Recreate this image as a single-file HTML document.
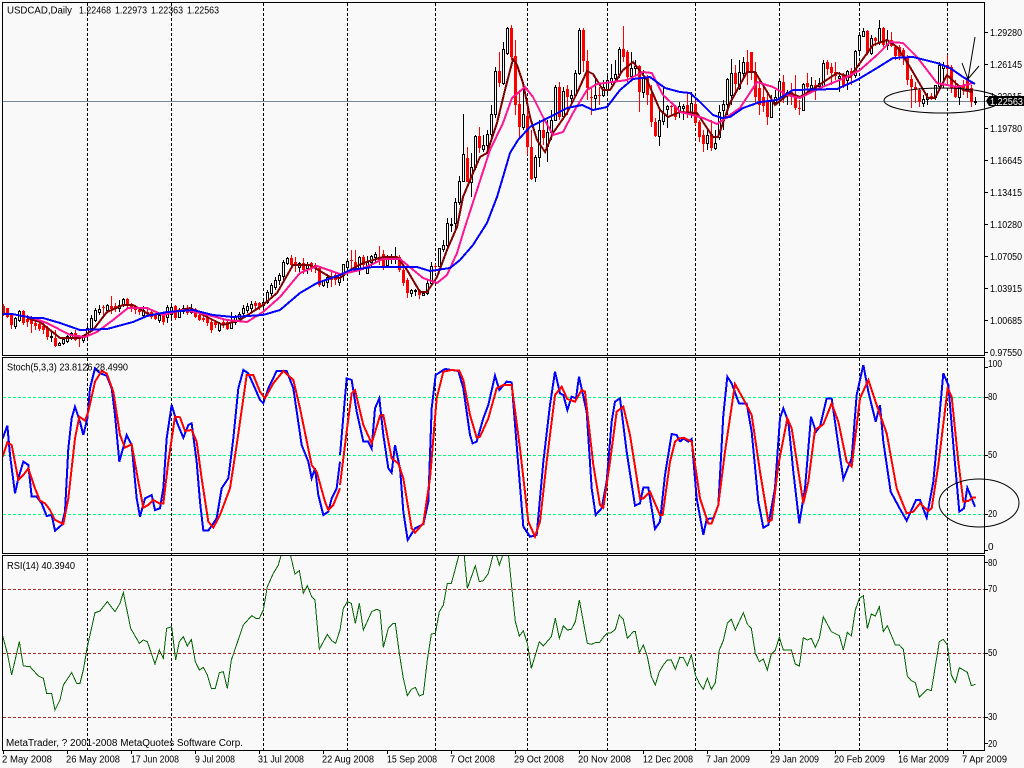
<!DOCTYPE html>
<html><head><meta charset="utf-8"><title>USDCAD,Daily</title>
<style>html,body{margin:0;padding:0;background:#f9f9f9;width:1024px;height:768px;overflow:hidden}svg{display:block}text{font-family:"Liberation Sans",sans-serif;font-size:10px;fill:#000}polyline,path,line{fill:none}</style></head>
<body>
<svg width="1024" height="768" viewBox="0 0 1024 768" xmlns="http://www.w3.org/2000/svg">
<defs>
<clipPath id="m"><rect x="3" y="3" width="981" height="352"/></clipPath>
<clipPath id="s"><rect x="3" y="358" width="981" height="195"/></clipPath>
<clipPath id="r"><rect x="3" y="556" width="981" height="194"/></clipPath>
</defs>
<rect width="1024" height="768" fill="#f9f9f9"/>
<g shape-rendering="crispEdges">
<!-- grid -->
<path stroke="#000" stroke-dasharray="3 2" d="M87.5 3V750M171.5 3V750M263.5 3V750M347.5 3V750M435.5 3V750M527.5 3V750M607.5 3V750M695.5 3V750M779.5 3V750M859.5 3V750M947.5 3V750"/>
<path stroke="#00ff7f" stroke-dasharray="3 2" d="M3 397.5H984M3 455.5H984M3 514.5H984"/>
<path stroke="#a52a2a" stroke-dasharray="3 2" d="M3 589.5H984M3 653.5H984M3 717.5H984"/>
<path stroke="#778899" d="M3 101.5H986"/>
<g clip-path="url(#m)">
<path stroke="#f00" d="M3.5 304V316M7.5 308V318M11.5 313V329M23.5 310V325M27.5 315V327M31.5 316V333M35.5 318V330M39.5 320V331M43.5 322V334M47.5 326V340M55.5 330V347M75.5 330V341M79.5 335V347M103.5 305V315M111.5 296V314M115.5 303V312M127.5 298V308M131.5 303V312M135.5 305V314M139.5 307V315M147.5 309V316M151.5 310V319M155.5 314V320M163.5 314V325M175.5 305V320M187.5 305V315M195.5 308V318M199.5 312V321M203.5 312V322M207.5 315V326M211.5 320V333M215.5 320V328M223.5 320V328M227.5 320V330M255.5 301V310M259.5 302V310M291.5 255V268M295.5 257V272M303.5 258V274M311.5 262V272M315.5 263V273M319.5 267V287M331.5 270V287M335.5 273V285M351.5 250V270M355.5 250V272M363.5 255V270M379.5 246V265M383.5 250V270M399.5 255V272M403.5 268V286M407.5 278V298M419.5 289V299M435.5 264V272M467.5 147V182M479.5 127V153M499.5 52V87M511.5 25V60M515.5 40V115M519.5 90V137M527.5 100V155M531.5 130V180M543.5 120V145M559.5 82V120M567.5 85V115M583.5 28V72M587.5 50V100M591.5 87V115M599.5 87V105M623.5 26V62M627.5 50V82M639.5 65V112M647.5 75V105M651.5 85V127M655.5 118V137M671.5 105V115M675.5 105V120M687.5 93V118M695.5 100V125M699.5 120V142M703.5 130V152M711.5 120V151M735.5 65V95M747.5 50V85M751.5 52V80M755.5 62V103M759.5 80V115M763.5 85V112M767.5 93V125M783.5 75V103M791.5 83V105M795.5 75V110M799.5 100V115M807.5 73V92M815.5 80V100M827.5 60V75M831.5 63V85M835.5 62V80M843.5 73V88M851.5 68V85M867.5 30V55M875.5 37V46M883.5 27V47M891.5 32V47M895.5 45V60M899.5 45V60M903.5 48V65M907.5 55V85M911.5 75V108M915.5 82V103M919.5 88V107M931.5 93V100M947.5 55V85M951.5 65V93M955.5 80V98M963.5 80V95M967.5 78V98M971.5 85V107"/>
<path stroke="#f00" stroke-width="3" d="M3.5 306V313M7.5 308V317M11.5 315V325M23.5 311V323M27.5 319V322M31.5 320V324M35.5 323V326M39.5 324V329M43.5 326V330M47.5 328V337M55.5 338V346M75.5 333V340M79.5 338V339M103.5 307V308M111.5 306V309M115.5 306V309M127.5 299V305M131.5 304V308M135.5 308V310M139.5 310V312M147.5 312V313M151.5 312V317M155.5 315V319M163.5 315V322M175.5 306V318M187.5 308V313M195.5 309V317M199.5 315V320M203.5 318V320M207.5 317V323M211.5 322V330M215.5 322V325M223.5 322V325M227.5 322V329M255.5 303V306M259.5 303V307M291.5 258V265M295.5 262V265M303.5 263V270M311.5 263V268M315.5 265V268M319.5 268V285M331.5 277V280M335.5 275V280M351.5 260V261M355.5 262V268M363.5 257V265M379.5 257V260M383.5 254V268M399.5 257V270M403.5 270V283M407.5 280V293M419.5 290V295M435.5 266V267M467.5 158V182M479.5 136V148M499.5 71V83M511.5 28V57M515.5 56V105M519.5 104V127M527.5 116V147M531.5 147V179M543.5 130V138M559.5 87V117M567.5 89V97M583.5 30V61M587.5 61V88M591.5 97V98M599.5 95V96M623.5 49V57M627.5 52V77M639.5 66V92M647.5 78V95M651.5 94V122M655.5 122V136M671.5 106V107M675.5 107V117M687.5 105V113M695.5 104V123M699.5 122V137M703.5 135V144M711.5 134V148M735.5 73V84M747.5 62V72M751.5 52V71M755.5 72V97M759.5 88V105M763.5 97V106M767.5 102V117M783.5 82V96M791.5 92V97M795.5 95V108M799.5 108V109M807.5 83V87M815.5 85V91M827.5 62V69M831.5 67V73M835.5 72V76M843.5 75V86M851.5 71V76M867.5 31V53M875.5 38V41M883.5 28V45M891.5 40V46M895.5 47V56M899.5 47V56M903.5 50V57M907.5 57V80M911.5 79V87M915.5 87V89M919.5 90V102M931.5 96V98M947.5 65V69M951.5 67V88M955.5 86V97M963.5 86V88M967.5 80V90M971.5 88V102"/>
<path stroke="#000" d="M15.5 317V329M19.5 310V322M51.5 332V342M59.5 342V346M63.5 338V345M67.5 335V343M71.5 332V340M83.5 335V343M87.5 326V338M91.5 315V332M95.5 308V322M99.5 305V315M107.5 304V312M119.5 300V312M123.5 298V307M143.5 306V318M159.5 314V323M167.5 305V323M171.5 305V318M179.5 308V318M183.5 305V314M191.5 304V314M219.5 322V332M231.5 312V329M235.5 315V325M239.5 312V322M243.5 305V316M247.5 303V313M251.5 301V312M263.5 300V308M267.5 290V304M271.5 283V296M275.5 277V290M279.5 273V285M283.5 260V280M287.5 257V265M299.5 262V272M307.5 262V274M323.5 280V287M327.5 274V288M339.5 273V286M343.5 264V281M347.5 258V270M359.5 256V275M367.5 256V273M371.5 255V266M375.5 252V262M387.5 255V268M391.5 254V264M395.5 247V264M411.5 289V297M415.5 289V296M423.5 292V296M427.5 280V295M431.5 262V285M439.5 248V266M443.5 240V252M447.5 218V248M451.5 218V232M455.5 198V229M459.5 176V205M463.5 114V181M471.5 153V197M475.5 135V170M483.5 135V152M487.5 130V150M491.5 105V140M495.5 67V118M503.5 42V85M507.5 27V55M523.5 85V130M535.5 155V182M539.5 120V167M547.5 120V162M551.5 110V140M555.5 85V120M563.5 87V118M571.5 90V103M575.5 70V97M579.5 28V75M595.5 77V110M603.5 80V97M607.5 73V93M611.5 64V85M615.5 60V80M619.5 47V78M631.5 52V80M635.5 60V76M643.5 70V98M659.5 110V146M663.5 88V125M667.5 105V128M679.5 102V118M683.5 104V120M691.5 92V118M707.5 128V150M715.5 130V150M719.5 105V140M723.5 100V130M727.5 78V115M731.5 59V105M739.5 60V90M743.5 57V80M771.5 95V117M775.5 90V105M779.5 80V105M787.5 90V105M803.5 83V111M811.5 77V92M819.5 78V88M823.5 60V87M839.5 72V92M847.5 70V90M855.5 50V78M859.5 32V55M863.5 28V37M871.5 35V55M879.5 20V45M887.5 30V50M923.5 95V107M927.5 93V105M935.5 85V100M939.5 62V88M943.5 62V88M959.5 85V105M975.5 97V105"/>
<path stroke="#000" fill="#f9f9f9" style="fill:#f9f9f9" d="M14.5 318.5h2v8h-2zM18.5 311.5h2v9h-2zM50.5 336.5h2v1h-2zM58.5 343.5h2v2h-2zM62.5 339.5h2v4h-2zM66.5 336.5h2v5h-2zM70.5 333.5h2v5h-2zM82.5 335.5h2v5h-2zM86.5 328.5h2v7h-2zM90.5 318.5h2v10h-2zM94.5 310.5h2v10h-2zM98.5 309.5h2v3h-2zM106.5 305.5h2v5h-2zM118.5 305.5h2v3h-2zM122.5 299.5h2v6h-2zM142.5 310.5h2v5h-2zM158.5 315.5h2v5h-2zM166.5 307.5h2v10h-2zM170.5 307.5h2v7h-2zM178.5 310.5h2v7h-2zM182.5 308.5h2v3h-2zM190.5 308.5h2v4h-2zM218.5 323.5h2v7h-2zM230.5 322.5h2v6h-2zM234.5 317.5h2v5h-2zM238.5 314.5h2v4h-2zM242.5 308.5h2v5h-2zM246.5 306.5h2v4h-2zM250.5 304.5h2v4h-2zM262.5 302.5h2v3h-2zM266.5 292.5h2v10h-2zM270.5 285.5h2v8h-2zM274.5 280.5h2v7h-2zM278.5 275.5h2v5h-2zM282.5 262.5h2v14h-2zM286.5 258.5h2v5h-2zM298.5 263.5h2v4h-2zM306.5 264.5h2v4h-2zM322.5 280.5h2v5h-2zM326.5 277.5h2v5h-2zM338.5 275.5h2v7h-2zM342.5 264.5h2v11h-2zM346.5 261.5h2v6h-2zM358.5 257.5h2v11h-2zM366.5 262.5h2v11h-2zM370.5 256.5h2v6h-2zM374.5 254.5h2v3h-2zM386.5 259.5h2v6h-2zM390.5 257.5h2v1h-2zM394.5 256.5h2v2h-2zM410.5 290.5h2v3h-2zM414.5 290.5h2v1h-2zM422.5 293.5h2v2h-2zM426.5 283.5h2v10h-2zM430.5 266.5h2v17h-2zM438.5 248.5h2v18h-2zM442.5 245.5h2v4h-2zM446.5 223.5h2v22h-2zM450.5 224.5h2v1h-2zM454.5 202.5h2v21h-2zM458.5 181.5h2v21h-2zM462.5 154.5h2v27h-2zM470.5 167.5h2v15h-2zM474.5 136.5h2v31h-2zM482.5 145.5h2v4h-2zM486.5 134.5h2v11h-2zM490.5 114.5h2v20h-2zM494.5 71.5h2v43h-2zM502.5 49.5h2v34h-2zM506.5 28.5h2v25h-2zM522.5 114.5h2v13h-2zM534.5 157.5h2v20h-2zM538.5 130.5h2v27h-2zM546.5 132.5h2v14h-2zM550.5 120.5h2v12h-2zM554.5 87.5h2v33h-2zM562.5 91.5h2v25h-2zM570.5 95.5h2v3h-2zM574.5 73.5h2v22h-2zM578.5 30.5h2v43h-2zM594.5 95.5h2v3h-2zM602.5 87.5h2v8h-2zM606.5 80.5h2v9h-2zM610.5 78.5h2v3h-2zM614.5 74.5h2v4h-2zM618.5 49.5h2v25h-2zM630.5 68.5h2v8h-2zM634.5 66.5h2v2h-2zM642.5 78.5h2v14h-2zM658.5 120.5h2v16h-2zM662.5 113.5h2v8h-2zM666.5 106.5h2v3h-2zM678.5 106.5h2v6h-2zM682.5 106.5h2v2h-2zM690.5 103.5h2v10h-2zM706.5 135.5h2v8h-2zM714.5 143.5h2v5h-2zM718.5 112.5h2v25h-2zM722.5 104.5h2v6h-2zM726.5 79.5h2v25h-2zM730.5 73.5h2v22h-2zM738.5 72.5h2v16h-2zM742.5 62.5h2v11h-2zM770.5 101.5h2v16h-2zM774.5 97.5h2v5h-2zM778.5 81.5h2v17h-2zM786.5 92.5h2v3h-2zM802.5 84.5h2v26h-2zM810.5 85.5h2v3h-2zM818.5 83.5h2v3h-2zM822.5 63.5h2v23h-2zM838.5 76.5h2v2h-2zM846.5 71.5h2v9h-2zM854.5 51.5h2v24h-2zM858.5 35.5h2v15h-2zM862.5 31.5h2v5h-2zM870.5 38.5h2v15h-2zM878.5 28.5h2v14h-2zM886.5 40.5h2v5h-2zM922.5 99.5h2v4h-2zM926.5 97.5h2v2h-2zM934.5 85.5h2v12h-2zM938.5 65.5h2v21h-2zM942.5 65.5h2v3h-2zM958.5 87.5h2v10h-2zM974.5 101.5h2v1h-2z"/>
<!-- moving averages -->
<polyline stroke="#800000" stroke-width="2" points="27,318 40,322 60,338 80,338 93,330 107,312 123,305 133,305 150,315 173,312 190,308 207,317 223,325 240,320 263,305 277,293 293,265 310,265 330,277 340,278 350,270 363,263 383,257 397,257 407,270 420,292 427,292 437,277 447,250 457,227 463,197 473,173 480,157 487,153 497,123 505,90 513,59 517,65 523,83 530,117 537,140 545,152 553,133 567,113 577,93 587,71 593,74 603,90 610,90 623,70 633,62 647,80 660,110 668,117 680,112 697,113 713,137 718,137 730,103 747,72 755,72 763,85 775,105 790,93 800,97 813,89 837,73 850,77 860,63 873,45 887,40 897,47 910,67 928,98 935,98 947,75 963,90 973,92"/>
<polyline stroke="#ff1493" stroke-width="2" points="33,318 47,323 70,335 85,337 97,332 113,320 128,308 147,308 163,315 183,310 200,313 227,320 247,322 263,312 280,297 300,273 317,266 340,274 347,273 360,270 383,259 400,259 423,278 437,283 447,275 457,253 465,227 477,190 490,150 503,123 512,98 525,87 533,97 543,117 553,135 563,132 573,113 587,90 597,84 627,80 643,72 652,73 663,95 677,108 680,112 693,115 703,118 717,124 730,115 740,108 757,82 773,87 787,95 800,98 820,88 847,77 860,70 877,55 890,42 903,43 917,57 937,83 957,87 973,83"/>
<polyline stroke="#0000ff" stroke-width="2" points="3,314 12,314 33,318 43,318 60,323 80,330 107,329 133,322 147,316 167,312 193,310 213,315 233,317 263,315 280,310 300,293 317,283 340,275 350,270 373,267 417,267 430,271 450,268 460,260 473,245 487,223 497,197 503,177 510,153 518,140 530,127 550,117 567,108 582,105 593,110 607,107 620,90 633,79 650,77 665,88 680,92 690,93 700,102 713,115 722,118 730,117 743,108 760,102 777,100 793,90 837,89 857,80 877,68 893,58 913,57 937,63 950,68 963,77 975,84"/>
</g>
<!-- stochastic -->
<g clip-path="url(#s)">
<g transform="translate(0,355) scale(.33333)" stroke-width="6" stroke="#0000ff">
<polyline points="8,250 22,212 30,300 45,415 55,370 70,320 85,330 95,425 110,425 125,445 140,483 155,480 165,527 185,510 195,470 205,280 215,190 225,155 240,200 250,240 262,190 270,100 285,40 300,55 320,62 335,100 345,180 358,320 380,240 395,270 410,430 420,485 435,430 455,420 465,465 480,460 490,400 500,250 515,150 530,200 550,248 565,210 575,205 590,320 600,440 610,527 625,527 650,490 665,400 685,370 700,250 715,100 730,45 745,55 765,100 780,135 790,145 805,100 830,48 860,48 880,100 905,270 925,320 935,370 945,340 955,420 970,480 985,470 995,430 1010,400 1020,320"/>
</g>
<g transform="translate(340,355) scale(.33333)" stroke-width="6" stroke="#0000ff">
<polyline points="0,300 20,70 35,75 50,170 70,260 85,260 95,280 105,160 118,130 130,240 145,340 155,353 165,270 180,340 190,470 203,555 225,520 250,508 265,440 275,160 287,60 315,42 355,48 370,100 390,240 398,265 410,260 430,190 445,150 465,62 478,105 500,80 515,82 530,270 550,515 570,545 590,540 610,320 630,150 645,50 660,115 670,120 682,165 695,125 708,130 717,65 740,170 755,400 767,480 785,460 800,380 815,200 825,140 840,130 860,290 885,452 900,445 910,398 925,398 945,522 960,500 975,360 995,237 1010,240 1020,260"/>
</g>
<g transform="translate(680,355) scale(.33333)" stroke-width="6" stroke="#0000ff">
<polyline points="0,260 10,250 25,260 35,252 50,430 70,540 80,492 100,490 115,450 130,180 142,65 155,85 177,145 200,145 215,230 235,440 250,518 265,510 285,400 300,190 310,160 325,200 340,350 358,505 375,400 393,185 408,230 420,215 440,130 455,130 475,270 490,372 515,310 530,120 550,30 565,110 587,200 600,150 610,260 632,410 660,462 680,497 708,435 720,435 740,488 760,380 790,55 805,90 820,270 838,470 852,460 862,398 885,455"/>
</g>
<g transform="translate(0,355) scale(.33333)" stroke-width="6" stroke="#ff0000">
<polyline points="8,305 22,262 35,270 55,375 70,360 85,340 105,400 120,437 135,445 150,465 165,495 190,507 205,430 225,250 238,185 255,197 265,170 285,80 305,48 320,55 340,110 360,240 375,278 395,268 415,380 430,458 445,450 460,435 478,445 490,445 505,320 525,185 540,187 555,228 575,225 590,260 605,370 625,500 640,518 660,480 690,400 710,270 740,60 760,60 780,110 795,130 820,85 850,48 880,75 900,160 935,330 950,350 975,440 985,465 1000,450 1020,400"/>
</g>
<g transform="translate(340,355) scale(.33333)" stroke-width="6" stroke="#ff0000">
<polyline points="0,390 20,230 35,115 45,105 70,210 95,265 120,182 130,180 155,310 175,325 190,370 215,520 225,533 250,505 270,370 290,130 310,50 335,45 358,47 370,75 390,180 410,248 420,245 445,190 470,100 490,90 515,90 540,280 565,500 585,545 600,500 620,320 645,120 665,95 682,132 705,140 725,105 735,110 760,330 780,450 790,458 810,320 830,170 850,155 870,240 900,430 910,430 930,410 960,480 968,480 990,320 1005,260 1020,248"/>
</g>
<g transform="translate(680,355) scale(.33333)" stroke-width="6" stroke="#ff0000">
<polyline points="0,250 10,248 35,260 60,430 85,505 95,505 115,450 135,290 165,87 190,132 215,180 240,350 265,500 275,495 295,330 322,190 335,220 370,445 385,380 405,225 430,208 455,145 475,200 500,320 515,335 540,130 565,75 590,150 620,235 650,400 680,475 700,470 720,445 745,468 755,460 775,330 803,100 815,125 835,320 850,440 865,438 878,428 888,428"/>
</g>
</g>
<!-- rsi -->
<g clip-path="url(#r)">
<g transform="translate(0,550) scale(.33333)" stroke-width="3" stroke="#006400">
<polyline points="8,258 22,310 35,375 58,275 70,348 90,350 115,378 130,385 140,430 155,430 165,480 180,450 190,405 215,368 230,400 240,400 250,360 262,290 285,188 300,183 322,155 345,185 360,160 370,128 392,235 418,280 430,270 442,275 465,342 478,300 490,325 500,235 515,230 527,330 538,275 550,260 562,288 574,268 586,335 598,360 610,352 622,375 634,415 646,415 658,368 670,365 682,415 694,330 730,225 755,197 768,205 778,205 790,180 802,110 820,70 835,45 845,10 870,10 885,72 898,62 910,130 922,107 935,140 945,150 958,298 982,253 995,272 1007,280 1020,240"/>
</g>
<g transform="translate(340,550) scale(.33333)" stroke-width="3" stroke="#006400">
<polyline points="0,240 10,175 22,155 34,160 46,220 58,160 70,240 95,185 110,178 120,182 130,292 145,235 160,220 166,220 178,310 190,385 202,437 214,418 226,412 238,438 250,433 262,330 274,252 286,250 298,185 310,165 322,100 334,100 345,60 358,10 372,10 382,115 406,47 418,95 430,92 445,70 458,20 466,5 478,45 490,10 505,10 514,100 526,215 538,258 550,242 562,280 574,355 598,275 610,288 634,260 646,205 658,265 670,228 682,240 694,238 706,215 718,150 742,280 754,283 766,278 778,278 790,262 802,250 814,248 826,238 838,195 850,208 862,265 880,245 886,245 898,308 910,285 922,320 934,380 946,405 958,365 970,345 982,330 994,330 1006,358 1020,320"/>
</g>
<g transform="translate(680,550) scale(.33333)" stroke-width="3" stroke="#006400">
<polyline points="0,322 10,323 22,347 34,315 46,375 58,400 70,418 82,385 94,418 106,398 118,300 130,272 142,220 154,208 166,240 190,188 202,222 214,235 226,310 238,335 250,327 262,360 274,312 286,300 298,262 310,300 334,300 346,342 358,348 370,263 382,270 394,265 406,292 418,265 430,200 454,245 478,257 490,300 502,247 514,258 526,180 538,145 550,137 562,235 574,192 586,198 598,170 610,245 622,227 646,285 658,285 670,298 682,378 694,392 706,398 718,442 742,418 754,422 778,275 790,268 802,285 814,375 826,398 838,353 862,367 874,407 886,403"/>
</g>
</g>
<!-- frame -->
<path stroke="#000" d="M2.5 2.5H984.5V355.5H2.5ZM2.5 357.5H984.5V553.5H2.5ZM2.5 555.5H984.5V750.5H2.5Z"/>
<path stroke="#000" d="M984 32.5h4M984 64.5h4M984 96.5h4M984 128.5h4M984 160.5h4M984 192.5h4M984 224.5h4M984 256.5h4M984 288.5h4M984 320.5h4M984 352.5h4M984 367.5h4M984 397.5h4M984 455.5h4M984 514.5h4M984 550.5h4M984 562.5h4M984 589.5h4M984 653.5h4M984 717.5h4M984 743.5h4M3.5 750v4M67.5 750v4M131.5 750v4M195.5 750v4M259.5 750v4M323.5 750v4M387.5 750v4M451.5 750v4M515.5 750v4M579.5 750v4M643.5 750v4M707.5 750v4M771.5 750v4M835.5 750v4M899.5 750v4M963.5 750v4"/>
</g>
<!-- annotations -->
<ellipse cx="942" cy="100.5" rx="58" ry="12.5" fill="none" stroke="#000"/>
<ellipse cx="979" cy="503" rx="40" ry="24" fill="none" stroke="#000"/>
<path stroke="#000" d="M968 79L975 37M962 63L968 79L979 66"/>
<!-- labels -->
<text x="7" y="13.5" textLength="65" lengthAdjust="spacingAndGlyphs">USDCAD,Daily</text>
<text x="79" y="13.5" textLength="32" lengthAdjust="spacingAndGlyphs">1.22468</text>
<text x="115" y="13.5" textLength="32" lengthAdjust="spacingAndGlyphs">1.22973</text>
<text x="151" y="13.5" textLength="32" lengthAdjust="spacingAndGlyphs">1.22363</text>
<text x="187" y="13.5" textLength="32" lengthAdjust="spacingAndGlyphs">1.22563</text>
<text x="7" y="370.5" textLength="121" lengthAdjust="spacingAndGlyphs">Stoch(5,3,3) 23.8126 28.4990</text>
<text x="7" y="569" textLength="68" lengthAdjust="spacingAndGlyphs">RSI(14) 40.3940</text>
<text x="6" y="746" textLength="237" lengthAdjust="spacingAndGlyphs">MetaTrader, ? 2001-2008 MetaQuotes Software Corp.</text>
<text x="990" y="36" textLength="32" lengthAdjust="spacingAndGlyphs">1.29280</text>
<text x="990" y="68" textLength="32" lengthAdjust="spacingAndGlyphs">1.26145</text>
<text x="990" y="100" textLength="32" lengthAdjust="spacingAndGlyphs">1.22915</text>
<text x="990" y="132" textLength="32" lengthAdjust="spacingAndGlyphs">1.19780</text>
<text x="990" y="164" textLength="32" lengthAdjust="spacingAndGlyphs">1.16645</text>
<text x="990" y="196" textLength="32" lengthAdjust="spacingAndGlyphs">1.13415</text>
<text x="990" y="228" textLength="32" lengthAdjust="spacingAndGlyphs">1.10280</text>
<text x="990" y="260" textLength="32" lengthAdjust="spacingAndGlyphs">1.07050</text>
<text x="990" y="292" textLength="32" lengthAdjust="spacingAndGlyphs">1.03915</text>
<text x="990" y="324" textLength="32" lengthAdjust="spacingAndGlyphs">1.00685</text>
<text x="990" y="356" textLength="32" lengthAdjust="spacingAndGlyphs">0.97550</text>
<path fill="#000" style="fill:#000" d="M986 101L989 96H1024V106H989Z"/>
<text x="990" y="105" textLength="33" lengthAdjust="spacingAndGlyphs" style="fill:#fff">1.22563</text>
<text x="988" y="367" textLength="14" lengthAdjust="spacingAndGlyphs">100</text>
<text x="988" y="400" textLength="9" lengthAdjust="spacingAndGlyphs">80</text>
<text x="988" y="458" textLength="9" lengthAdjust="spacingAndGlyphs">50</text>
<text x="988" y="517" textLength="9" lengthAdjust="spacingAndGlyphs">20</text>
<text x="988" y="550">0</text>
<text x="988" y="566" textLength="9" lengthAdjust="spacingAndGlyphs">80</text>
<text x="988" y="592" textLength="9" lengthAdjust="spacingAndGlyphs">70</text>
<text x="988" y="656" textLength="9" lengthAdjust="spacingAndGlyphs">50</text>
<text x="988" y="720" textLength="9" lengthAdjust="spacingAndGlyphs">30</text>
<text x="988" y="747" textLength="9" lengthAdjust="spacingAndGlyphs">20</text>
<text x="2" y="762.5" textLength="50" lengthAdjust="spacingAndGlyphs">2 May 2008</text>
<text x="66" y="762.5" textLength="54" lengthAdjust="spacingAndGlyphs">26 May 2008</text>
<text x="131" y="762.5" textLength="48" lengthAdjust="spacingAndGlyphs">17 Jun 2008</text>
<text x="195" y="762.5" textLength="40" lengthAdjust="spacingAndGlyphs">9 Jul 2008</text>
<text x="258" y="762.5" textLength="46" lengthAdjust="spacingAndGlyphs">31 Jul 2008</text>
<text x="322" y="762.5" textLength="52" lengthAdjust="spacingAndGlyphs">22 Aug 2008</text>
<text x="387" y="762.5" textLength="50" lengthAdjust="spacingAndGlyphs">15 Sep 2008</text>
<text x="450" y="762.5" textLength="45" lengthAdjust="spacingAndGlyphs">7 Oct 2008</text>
<text x="514" y="762.5" textLength="50" lengthAdjust="spacingAndGlyphs">29 Oct 2008</text>
<text x="578" y="762.5" textLength="53" lengthAdjust="spacingAndGlyphs">20 Nov 2008</text>
<text x="643" y="762.5" textLength="50" lengthAdjust="spacingAndGlyphs">12 Dec 2008</text>
<text x="706" y="762.5" textLength="44" lengthAdjust="spacingAndGlyphs">7 Jan 2009</text>
<text x="770" y="762.5" textLength="49" lengthAdjust="spacingAndGlyphs">29 Jan 2009</text>
<text x="834" y="762.5" textLength="51" lengthAdjust="spacingAndGlyphs">20 Feb 2009</text>
<text x="898" y="762.5" textLength="51" lengthAdjust="spacingAndGlyphs">16 Mar 2009</text>
<text x="962" y="762.5" textLength="45" lengthAdjust="spacingAndGlyphs">7 Apr 2009</text>
</svg>
</body></html>
